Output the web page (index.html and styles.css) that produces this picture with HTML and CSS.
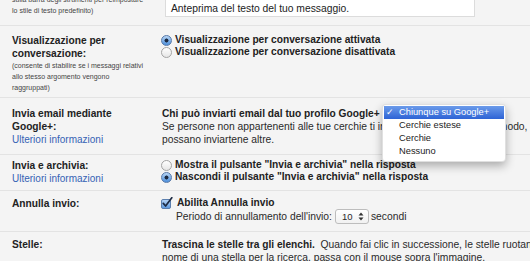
FILE: index.html
```html
<!DOCTYPE html>
<html lang="it">
<head>
  <meta charset="UTF-8">
  <title>Impostazioni</title>
  <link rel="stylesheet" href="styles.css">
</head>
<body>

  <div class="settings">

    <div class="row row-top">
      <div class="label">
        <p class="hint">sulla barra degli strumenti per reimpostare<br>lo stile di testo predefinito)</p>
      </div>
      <div class="value">
        <div class="preview">Anteprima del testo del tuo messaggio.</div>
      </div>
    </div>

    <div class="row row-conv">
      <div class="label">
        <div>Visualizzazione per</div>
        <div>conversazione:</div>
        <p class="hint">(consente di stabilire se i messaggi relativi<br>allo stesso argomento vengono<br>raggruppati)</p>
      </div>
      <div class="value">
        <div class="opt"><span class="radio on"></span>Visualizzazione per conversazione attivata</div>
        <div class="opt"><span class="radio"></span>Visualizzazione per conversazione disattivata</div>
      </div>
    </div>

    <div class="row row-gplus">
      <div class="label">
        <div>Invia email mediante</div>
        <div>Google+:</div>
        <a class="more" href="#">Ulteriori informazioni</a>
      </div>
      <div class="value">
        <div class="strong">Chi può inviarti email dal tuo profilo Google+</div>
        <div class="text">Se persone non appartenenti alle tue cerchie ti inviano un'email in questo modo, sarà necessario che tu risponda prima che</div>
        <div class="text">possano inviartene altre.</div>
      </div>

      <!-- menu aperto del selettore -->
      <ul class="menu">
        <li class="selected"><span class="check">✓</span>Chiunque su Google+</li>
        <li>Cerchie estese</li>
        <li>Cerchie</li>
        <li>Nessuno</li>
      </ul>
    </div>

    <div class="row row-archive">
      <div class="label">
        <div>Invia e archivia:</div>
        <a class="more" href="#">Ulteriori informazioni</a>
      </div>
      <div class="value">
        <div class="opt"><span class="radio"></span>Mostra il pulsante "Invia e archivia" nella risposta</div>
        <div class="opt"><span class="radio on"></span>Nascondi il pulsante "Invia e archivia" nella risposta</div>
      </div>
    </div>

    <div class="row row-undo">
      <div class="label">
        <div>Annulla invio:</div>
      </div>
      <div class="value">
        <div class="opt">
          <svg class="checkbox" width="12" height="12" viewBox="0 0 12 12">
            <defs>
              <linearGradient id="cb" x1="0" y1="0" x2="0" y2="1">
                <stop offset="0" stop-color="#b9d6f6"/>
                <stop offset="1" stop-color="#5a97de"/>
              </linearGradient>
            </defs>
            <rect x="0.5" y="2.5" width="9" height="9" rx="1.5" fill="url(#cb)" stroke="#5b7fae"/>
            <path d="M2.3 6.4 L4.6 9 L10.8 0.8" fill="none" stroke="#1d2b44" stroke-width="1.7" stroke-linecap="round" stroke-linejoin="round"/>
          </svg>
          Abilita Annulla invio
        </div>
        <div class="text period">
          Periodo di annullamento dell'invio:
          <span class="select">10
            <svg width="6" height="9" viewBox="0 0 6 9"><path d="M3 0.5 L5.5 3.5 H0.5Z M3 8.5 L5.5 5.5 H0.5Z" fill="#333"/></svg>
          </span>secondi
        </div>
      </div>
    </div>

    <div class="row row-stars">
      <div class="label">
        <div>Stelle:</div>
      </div>
      <div class="value">
        <div class="text"><b>Trascina le stelle tra gli elenchi.</b>&nbsp; Quando fai clic in successione, le stelle ruotano nell'ordine indicato di seguito. Per conoscere il</div>
        <div class="text">nome di una stella per la ricerca, passa con il mouse sopra l'immagine.</div>
      </div>
    </div>

  </div>

</body>
</html>
```

FILE: styles.css
```css
body {
  margin: 0;
  background: #f4f4f4;
  font-family: "Liberation Sans", Arial, Helvetica, sans-serif;
  color: #222;
  font-size: 10px;
  overflow: hidden;
}

.settings {
  margin-top: -8px;
}

.row {
  display: grid;
  grid-template-columns: 150px 1fr;
  padding: 8px 0 4px 12px;
  border-top: 1px solid #e3e3e3;
  position: relative;
  white-space: nowrap;
}

.label {
  font-weight: bold;
  font-size: 10.2px;
  line-height: 13px;
}

.hint {
  margin: 0;
  font-weight: normal;
  font-size: 7px;
  line-height: 11px;
  color: #444;
}

.more {
  display: block;
  font-weight: normal;
  font-size: 10px;
  color: #3462b4;
  text-decoration: none;
}

.value {
  line-height: 13px;
}

.strong {
  font-weight: bold;
  font-size: 10.2px;
}

.text {
  font-size: 10.3px;
  color: #2a2a2a;
}

.text b {
  font-size: 10.2px;
  color: #222;
}

.opt {
  display: flex;
  align-items: center;
  gap: 3px;
  font-weight: bold;
  font-size: 10.2px;
  line-height: 12px;
  margin-left: -1px;
}

/* prima riga, tagliata in alto */
.row-top {
  border-top: none;
  padding: 0 0 8px 12px;
  align-items: end;
}

.row-top .hint {
  margin-bottom: 1px;
}

.preview {
  box-sizing: border-box;
  width: 310px;
  margin-left: 3px;
  padding: 9px 5px 1px;
  background: #fff;
  border: 1px solid #dcdcdc;
  font-size: 10.3px;
  line-height: 13px;
  color: #222;
}

.row-conv {
  padding-bottom: 4px;
}

.row-gplus {
  padding: 9px 0 8px 12px;
}

.row-archive {
  padding: 4px 0 5px 12px;
}

.row-undo {
  padding: 6px 0 7px 12px;
}

.row-stars {
  padding: 6px 0 10px 12px;
}

.radio {
  display: inline-block;
  width: 11px;
  height: 11px;
  box-sizing: border-box;
  border-radius: 50%;
  border: 1px solid #a4a4a4;
  background: linear-gradient(#ffffff, #e6e6e6);
  flex: none;
}

.radio.on {
  border-color: #5879a8;
  background: radial-gradient(circle, #1b2940 0 1.7px, transparent 2.3px),
              linear-gradient(#b7d5f5, #4d8fdb);
}

.checkbox {
  flex: none;
  margin-right: 1px;
}

.period {
  display: flex;
  align-items: center;
  padding-left: 14px;
  height: 15px;
}

.select {
  display: inline-flex;
  align-items: center;
  justify-content: space-between;
  box-sizing: border-box;
  width: 34px;
  height: 15px;
  margin: 0 2px 0 3px;
  padding: 0 4px 0 6px;
  background: linear-gradient(#ffffff, #f1f1f1);
  border: 1px solid #bdbdbd;
  border-radius: 3px;
  font-size: 9.5px;
}

.menu {
  position: absolute;
  z-index: 10;
  left: 382px;
  top: 6px;
  width: 124px;
  margin: 0;
  padding: 1px 0 3px;
  list-style: none;
  background: #fff;
  border: 1px solid rgba(0, 0, 0, 0.12);
  border-radius: 4px;
  box-shadow: 0 4px 10px rgba(0, 0, 0, 0.3);
  box-sizing: border-box;
  font-size: 9.3px;
  line-height: 13px;
  color: #222;
}

.menu li {
  position: relative;
  padding-left: 15px;
  margin: 0 1px;
}

.menu li.selected {
  background: linear-gradient(#6b9bea, #2d63d5);
  color: #fff;
}

.check {
  position: absolute;
  left: 2px;
  top: 0;
}
```
